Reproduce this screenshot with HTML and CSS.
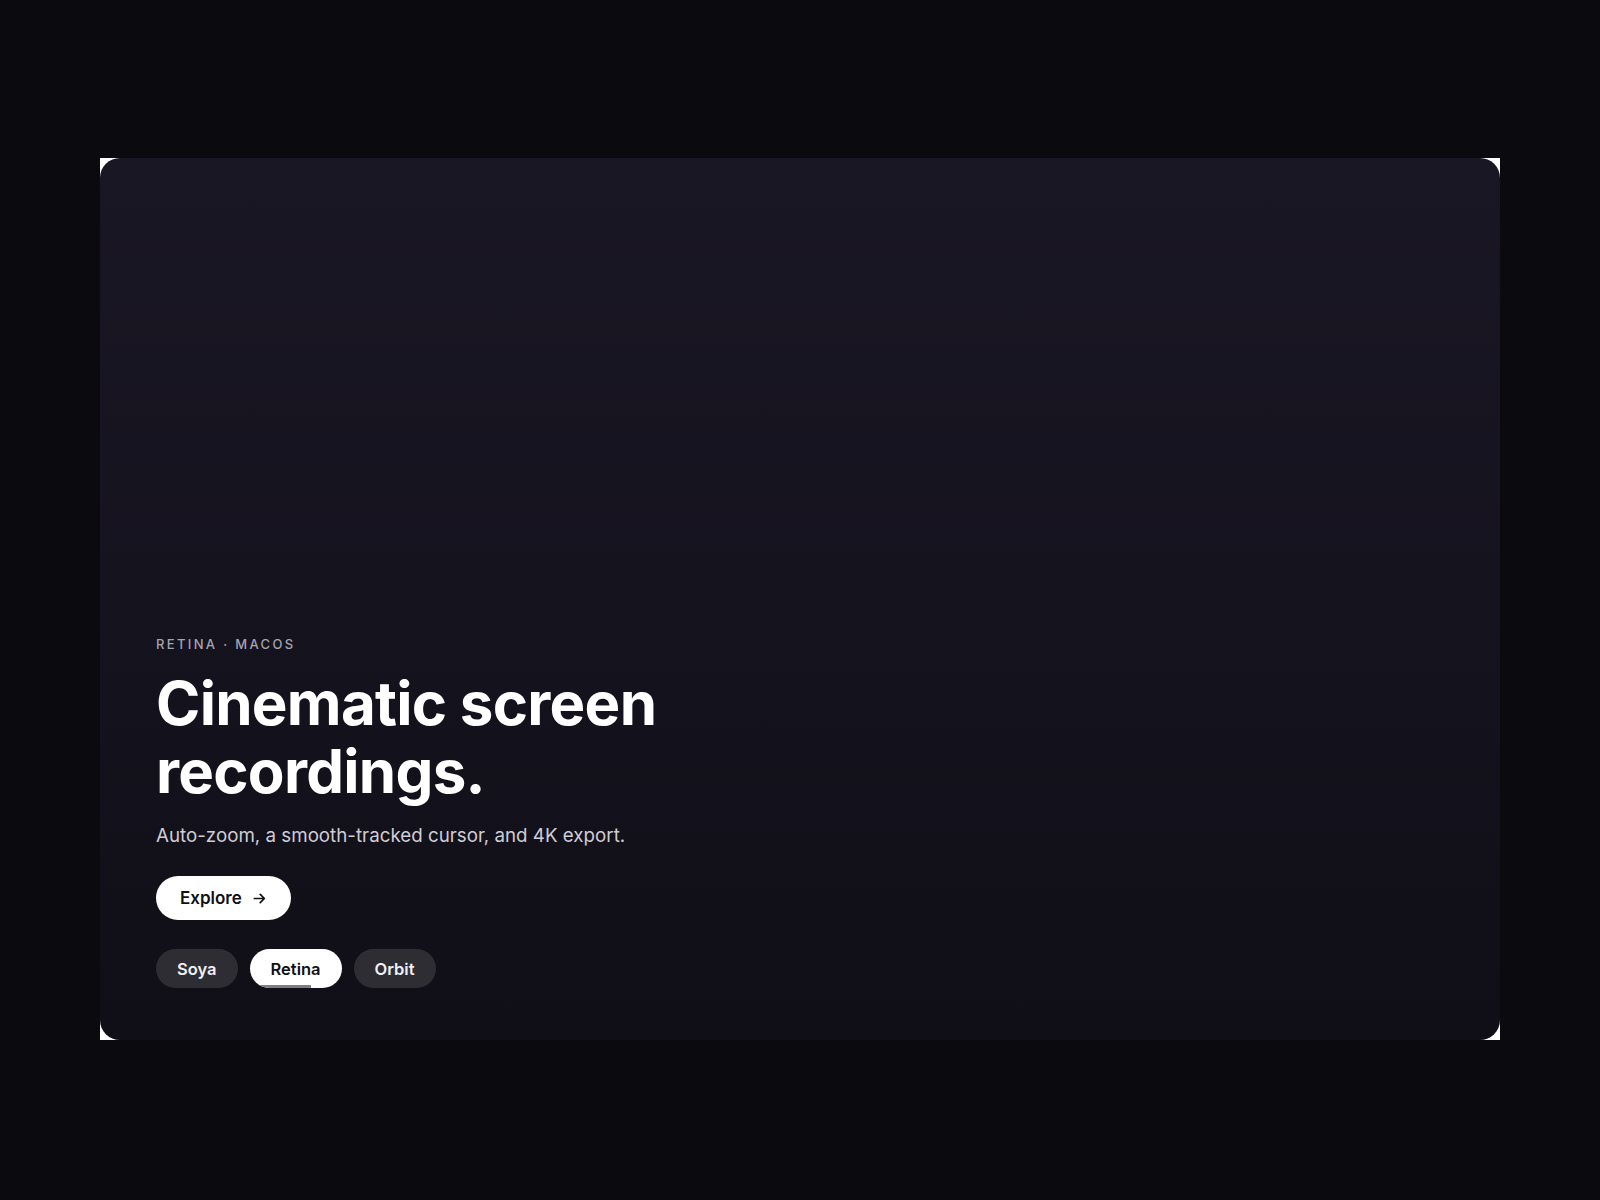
FILE: index.html
```html
<!DOCTYPE html>
<html lang="en">
<head>
<meta charset="utf-8">
<title>Retina · macOS</title>
<link rel="stylesheet" href="styles.css">
</head>
<body>
<main class="stage">
  <div class="frame">
    <section class="hero">
      <div class="hero-content">
        <p class="eyebrow">RETINA · MACOS</p>
        <h1 class="title">Cinematic screen<br>recordings.</h1>
        <p class="subtitle">Auto-zoom, a smooth-tracked cursor, and 4K export.</p>
        <a class="cta" href="#">Explore
          <svg class="cta-icon" viewBox="0 0 16 16" width="15" height="15" aria-hidden="true">
            <path d="M2.5 8h10.5M8.8 3.6 13.2 8l-4.4 4.4" fill="none" stroke="currentColor" stroke-width="1.8" stroke-linecap="round" stroke-linejoin="round"/>
          </svg>
        </a>
        <div class="chips">
          <button class="chip">Soya</button>
          <button class="chip chip-active">Retina<span class="chip-progress" style="width: 67%"></span></button>
          <button class="chip">Orbit</button>
        </div>
      </div>
    </section>
  </div>
</main>
</body>
</html>
```

FILE: styles.css
```css
* {
  box-sizing: border-box;
}

html, body {
  margin: 0;
  padding: 0;
}

body {
  background: #0b0b0f;
  font-family: Inter, "Noto Sans", "Liberation Sans", sans-serif;
  color: #ffffff;
}

.stage {
  min-height: 1200px;
  display: flex;
  align-items: center;
  justify-content: center;
}

.frame {
  width: 1400px;
  height: 882px;
  background: #ffffff;
  margin-top: -2px;
}

.hero {
  width: 100%;
  height: 100%;
  border-radius: 20px;
  background: linear-gradient(180deg, #1a1724 0%, #15131e 50%, #100e16 100%);
  display: flex;
  flex-direction: column;
  justify-content: flex-end;
  padding: 0 56px 52px;
}

.hero-content {
  display: flex;
  flex-direction: column;
  align-items: flex-start;
}

.eyebrow {
  margin: 0;
  font-size: 13px;
  line-height: 16px;
  font-weight: 500;
  letter-spacing: 0.18em;
  color: #a6a4b0;
}

.title {
  margin: 18px 0 0;
  font-size: 60px;
  line-height: 1.125;
  font-weight: 700;
  letter-spacing: -0.012em;
  color: #ffffff;
}

.subtitle {
  margin: 17px 0 0;
  font-size: 18.75px;
  line-height: 28px;
  font-weight: 400;
  color: #cfcdd6;
}

.cta {
  margin-top: 26px;
  height: 44px;
  padding: 0 24px 0 24px;
  display: inline-flex;
  align-items: center;
  gap: 10px;
  background: #ffffff;
  color: #111015;
  border-radius: 999px;
  font-size: 17px;
  font-weight: 600;
  text-decoration: none;
}

.cta-icon {
  display: block;
}

.chips {
  margin-top: 29px;
  display: flex;
  gap: 12px;
}

.chip {
  position: relative;
  overflow: hidden;
  height: 39px;
  padding: 0 21px;
  border: none;
  border-radius: 999px;
  background: #2e2d34;
  color: #f1f0f4;
  font-family: inherit;
  font-size: 16.5px;
  font-weight: 600;
  cursor: pointer;
}

.chip-active {
  background: #ffffff;
  color: #111015;
}

.chip-progress {
  position: absolute;
  left: 0;
  bottom: 0;
  height: 3px;
  background: #7e7d86;
}
```
